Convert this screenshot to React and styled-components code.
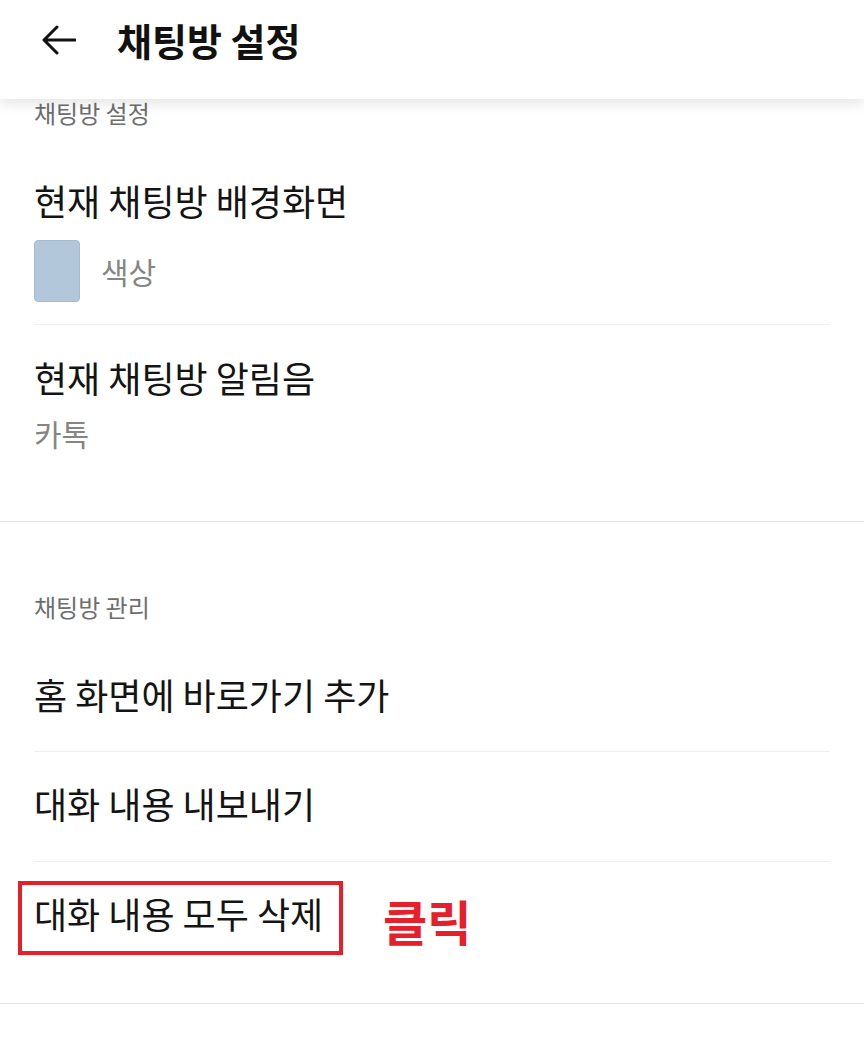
import React from "react";
import styled, { createGlobalStyle } from "styled-components";

const Global = createGlobalStyle`
  html, body { margin: 0; padding: 0; background: #ffffff; }
  body { font-family: "Noto Sans CJK KR", "Noto Sans", sans-serif; color: #111; }
  * { box-sizing: border-box; }
`;

const Page = styled.div`
  width: 864px;
  min-height: 1040px;
  background: #fff;
  display: flex;
  flex-direction: column;
`;

const Header = styled.header`
  position: relative;
  z-index: 1;
  height: 99px;
  padding: 0 0 19px 40px;
  background: #fff;
  box-shadow: 0 5px 12px rgba(0, 0, 0, 0.1);
  display: flex;
  align-items: center;
  gap: 41px;
`;

const BackButton = styled.button`
  border: 0;
  background: none;
  padding: 0;
  width: 36px;
  height: 32px;
  display: flex;
  align-items: center;
  justify-content: center;
  color: #111;
`;

const Title = styled.h1`
  margin: 0;
  font-size: 38px;
  font-weight: 700;
  line-height: 44px;
  color: #111;
`;

const Section = styled.section`
  display: flex;
  flex-direction: column;
  padding-top: ${(p) => p.$top}px;
  border-bottom: 1px solid #e4e4e4;
`;

const Label = styled.div`
  padding-left: 34px;
  font-size: 24px;
  line-height: 28px;
  color: #6e6e6e;
`;

const Item = styled.div`
  padding: ${(p) => p.$top || 0}px 34px ${(p) => p.$bottom || 0}px;
  display: flex;
  flex-direction: column;
`;

const ItemTitle = styled.div`
  font-size: 36px;
  line-height: 44px;
  color: #141414;
  white-space: nowrap;
`;

const SubText = styled.div`
  font-size: 30px;
  line-height: 36px;
  color: #858585;
  margin-top: ${(p) => p.$top || 0}px;
`;

const ColorRow = styled.div`
  margin-top: 18px;
  display: flex;
  align-items: center;
  gap: 21px;
  height: 62px;
`;

const Swatch = styled.div`
  width: 46px;
  height: 62px;
  border-radius: 4px;
  background: #b3c7db;
  border: 1px solid #a7bbcf;
`;

const Divider = styled.hr`
  margin: 0 34px;
  border: 0;
  height: 1px;
  background: #efefef;
`;

const ActionRow = styled.div`
  display: flex;
  align-items: center;
  padding: ${(p) => p.$top || 0}px 0 ${(p) => p.$bottom || 0}px 18px;
  gap: 40px;
`;

const Highlight = styled.div`
  width: 325px;
  height: 74px;
  border: 4px solid #e5202b;
  padding: 6px 12px 0;
`;

const ClickNote = styled.span`
  font-size: 48px;
  font-weight: 700;
  line-height: 56px;
  color: #e5202b;
  margin-top: 4px;
`;

function BackArrow() {
  return (
    <svg width="36" height="32" viewBox="0 0 36 32" fill="none">
      <path
        d="M35 16H4M17 3L4 16L17 29"
        stroke="currentColor"
        strokeWidth="3"
        strokeLinecap="round"
        strokeLinejoin="round"
      />
    </svg>
  );
}

export default function App() {
  return (
    <>
      <Global />
      <Page>
        <Header>
          <BackButton aria-label="뒤로">
            <BackArrow />
          </BackButton>
          <Title>채팅방 설정</Title>
        </Header>

        <Section $top={0}>
          <Label>채팅방 설정</Label>
          <Item $top={51} $bottom={22}>
            <ItemTitle>현재 채팅방 배경화면</ItemTitle>
            <ColorRow>
              <Swatch />
              <SubText>색상</SubText>
            </ColorRow>
          </Item>
          <Divider />
          <Item $top={30} $bottom={70}>
            <ItemTitle>현재 채팅방 알림음</ItemTitle>
            <SubText $top={16}>카톡</SubText>
          </Item>
        </Section>

        <Section $top={71}>
          <Label>채팅방 관리</Label>
          <Item $top={51} $bottom={35}>
            <ItemTitle>홈 화면에 바로가기 추가</ItemTitle>
          </Item>
          <Divider />
          <Item $top={29} $bottom={36}>
            <ItemTitle>대화 내용 내보내기</ItemTitle>
          </Item>
          <Divider />
          <ActionRow $top={19} $bottom={48}>
            <Highlight>
              <ItemTitle>대화 내용 모두 삭제</ItemTitle>
            </Highlight>
            <ClickNote>클릭</ClickNote>
          </ActionRow>
        </Section>
      </Page>
    </>
  );
}
